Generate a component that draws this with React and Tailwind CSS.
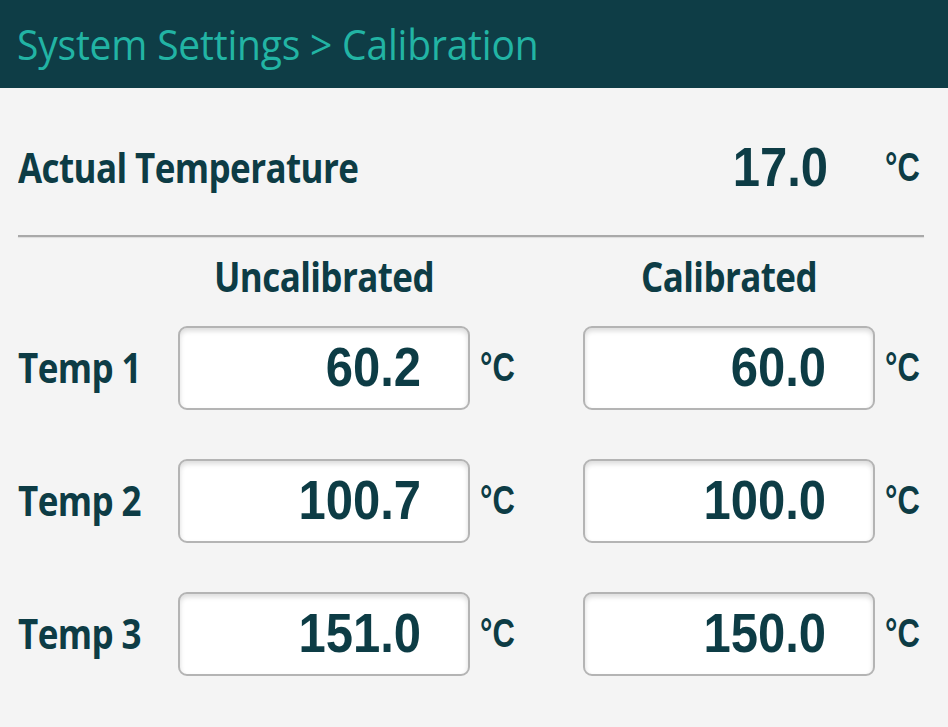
const rows = [
  { label: "Temp 1", raw: "60.2", cal: "60.0" },
  { label: "Temp 2", raw: "100.7", cal: "100.0" },
  { label: "Temp 3", raw: "151.0", cal: "150.0" },
];

const labelFont = { fontFamily: "'Open Sans', sans-serif" };
const numFont = { fontFamily: "'Liberation Sans', Arial, sans-serif" };

const Unit = () => (
  <span
    className="inline-block scale-y-[1.3] pl-[10px] text-[31px] font-bold text-[#0d3c45]"
    style={numFont}
  >
    °C
  </span>
);

const ValueBox = ({ value }) => (
  <div className="flex h-[84px] w-[292px] items-center justify-end rounded-[9px] border-2 border-[#b4b4b4] bg-white pr-[47px] shadow-[inset_0_3px_5px_rgba(0,0,0,0.14)]">
    <span
      className="inline-block scale-y-[1.15] text-[49px] font-bold text-[#0d3c45]"
      style={numFont}
    >
      {value}
    </span>
  </div>
);

const Label = ({ children }) => (
  <span
    className="inline-block scale-y-[1.15] text-[35px] font-bold tracking-[-0.6px] text-[#0d3c45]"
    style={labelFont}
  >
    {children}
  </span>
);

export default function App() {
  return (
    <div className="h-[727px] w-[948px] overflow-hidden bg-[#f4f4f4]">
      <div className="flex h-[88px] items-center bg-[#0e3d46] pl-[17px]">
        <span
          className="inline-block scale-y-[1.06] text-[39px] font-medium tracking-[-0.2px] text-[#22b4a4]"
          style={labelFont}
        >
          System Settings &gt; Calibration
        </span>
      </div>

      <div className="mt-[38px] grid h-[84px] grid-cols-[160px_292px_113px_292px_1fr] pl-[18px]">
        <div className="col-span-3 flex items-center">
          <Label>Actual Temperature</Label>
        </div>
        <div className="flex items-center justify-end pr-[47px]">
          <span
            className="inline-block scale-y-[1.15] text-[49px] font-bold text-[#0d3c45]"
            style={numFont}
          >
            17.0
          </span>
        </div>
        <div className="flex items-center">
          <Unit />
        </div>
      </div>

      <div className="mx-[18px] mt-[25px] h-[2px] w-[906px] bg-[#a9a9a9] shadow-[0_1px_1px_rgba(0,0,0,0.1)]" />

      <div className="mt-[20px] grid grid-cols-[160px_292px_113px_292px_1fr] pl-[18px]">
        <div className="col-start-2 flex h-[40px] items-center justify-center">
          <Label>Uncalibrated</Label>
        </div>
        <div className="col-start-4 flex h-[40px] items-center justify-center">
          <Label>Calibrated</Label>
        </div>
      </div>

      <div className="mt-[29px] flex flex-col gap-[49px]">
        {rows.map((r) => (
          <div
            key={r.label}
            className="grid grid-cols-[160px_292px_113px_292px_1fr] pl-[18px]"
          >
            <div className="flex h-[84px] items-center">
              <Label>{r.label}</Label>
            </div>
            <ValueBox value={r.raw} />
            <div className="flex items-center">
              <Unit />
            </div>
            <ValueBox value={r.cal} />
            <div className="flex items-center">
              <Unit />
            </div>
          </div>
        ))}
      </div>
    </div>
  );
}
